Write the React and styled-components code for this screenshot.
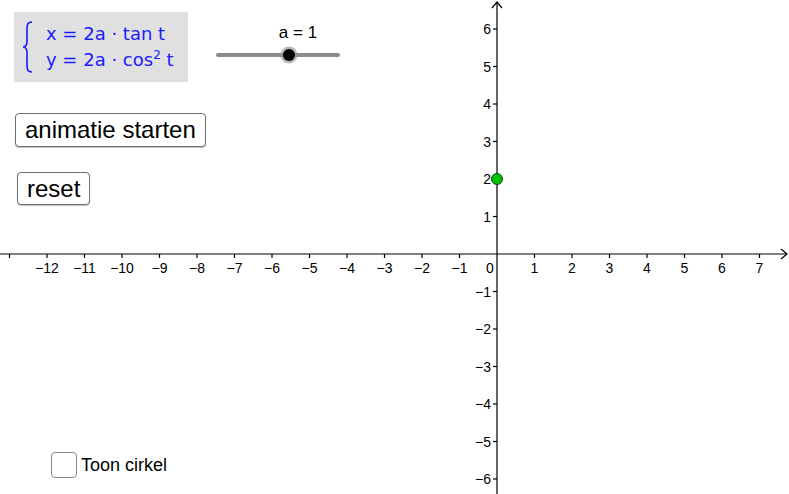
import styled, { createGlobalStyle } from "styled-components";

const W = 789;
const H = 494;
const OX = 497;
const OY = 254;
const U = 37.5;

const GlobalStyle = createGlobalStyle`
  html, body {
    margin: 0;
    padding: 0;
    background: #ffffff;
  }
  body {
    font-family: "Liberation Sans", Arial, sans-serif;
  }
`;

const Applet = styled.div`
  position: relative;
  width: ${W}px;
  height: ${H}px;
  overflow: hidden;
  background: #ffffff;
`;

const Graph = styled.svg`
  position: absolute;
  left: 0;
  top: 0;
`;

const FormulaBox = styled.div`
  position: absolute;
  left: 14px;
  top: 12px;
  width: 174px;
  height: 70px;
  background: #e0e0e0;
  display: flex;
  align-items: center;
  gap: 12px;
  padding-left: 8px;
  box-sizing: border-box;
  color: #1a1aff;
`;

const Lines = styled.div`
  display: flex;
  flex-direction: column;
  gap: 2px;
  font-family: "DejaVu Sans", sans-serif;
  font-size: 18px;
  line-height: 24px;
  white-space: nowrap;
`;

const Sup = styled.sup`
  font-size: 12px;
  vertical-align: 7px;
  line-height: 0;
`;

const SliderWrap = styled.div`
  position: absolute;
  left: 212px;
  top: 23px;
  width: 132px;
  display: flex;
  flex-direction: column;
  align-items: center;
`;

const SliderLabel = styled.div`
  font-size: 17px;
  line-height: 20px;
  color: #000;
  margin-left: 40px;
`;

const Button = styled.button`
  position: absolute;
  left: ${(p) => p.x}px;
  top: ${(p) => p.y}px;
  height: ${(p) => p.h}px;
  padding: 0 9px;
  background: #ffffff;
  border: 1px solid #6e6e6e;
  border-radius: 4px;
  box-shadow: 0 1px 1px rgba(0, 0, 0, 0.25);
  font-family: "Liberation Sans", Arial, sans-serif;
  font-size: 24px;
  color: #000;
  display: flex;
  align-items: center;
`;

const CheckRow = styled.label`
  position: absolute;
  left: 51px;
  top: 452px;
  display: flex;
  align-items: center;
  gap: 4px;
  font-size: 18px;
  color: #000;
`;

const Box = styled.span`
  width: 24px;
  height: 24px;
  border: 1.5px solid #8a8a8a;
  border-radius: 4px;
  background: #fff;
`;

function Brace() {
  return (
    <svg width="12" height="52" viewBox="0 0 12 52">
      <path
        d="M10 1 C5 1 5 4 5 10 L5 20 C5 24 4 26 1 26 C4 26 5 28 5 32 L5 42 C5 48 5 51 10 51"
        fill="none"
        stroke="#1a1aff"
        strokeWidth="1.6"
      />
    </svg>
  );
}

function Axes() {
  const xs = [];
  for (let i = -13; i <= 7; i++) xs.push(i);
  const ys = [];
  for (let j = -6; j <= 6; j++) ys.push(j);
  const fmt = (n) => (n < 0 ? "\u2212" + Math.abs(n) : String(n));
  return (
    <Graph width={W} height={H} viewBox={`0 0 ${W} ${H}`}>
      <g stroke="#000" strokeWidth="1.2" fill="none">
        <line x1="0" y1={OY} x2={W - 2} y2={OY} />
        <line x1={OX} y1={H} x2={OX} y2={2} />
        <polyline points={`${W - 8},${OY - 5} ${W - 2},${OY} ${W - 8},${OY + 5}`} />
        <polyline points={`${OX - 5},8 ${OX},2 ${OX + 5},8`} />
        {xs.filter((i) => i !== 0).map((i) => (
          <line key={"tx" + i} x1={OX + i * U} y1={OY} x2={OX + i * U} y2={OY + 4} />
        ))}
        {ys.filter((j) => j !== 0).map((j) => (
          <line key={"ty" + j} x1={OX - 4} y1={OY - j * U} x2={OX} y2={OY - j * U} />
        ))}
      </g>
      <g fontFamily="Liberation Sans, Arial, sans-serif" fontSize="14" fill="#000">
        {xs.filter((i) => i !== 0 && i > -13).map((i) => (
          <text key={"lx" + i} x={OX + i * U} y={OY + 19} textAnchor="middle">
            {fmt(i)}
          </text>
        ))}
        <text x={OX - 7} y={OY + 19} textAnchor="middle">0</text>
        {ys.filter((j) => j !== 0).map((j) => (
          <text key={"ly" + j} x={OX - 6} y={OY - j * U + 5} textAnchor="end">
            {fmt(j)}
          </text>
        ))}
      </g>
      <circle cx={OX} cy={OY - 2 * U} r="5.5" fill="#00c000" stroke="#005000" strokeWidth="1" />
    </Graph>
  );
}

export default function App() {
  return (
    <>
      <GlobalStyle />
      <Applet>
        <Axes />
        <FormulaBox>
          <Brace />
          <Lines>
            <span>x = 2a · tan t</span>
            <span>
              y = 2a · cos<Sup>2</Sup> t
            </span>
          </Lines>
        </FormulaBox>
        <SliderWrap>
          <SliderLabel>a = 1</SliderLabel>
          <svg width="132" height="24" viewBox="0 0 132 24">
            <line x1="6" y1="12" x2="126" y2="12" stroke="#8c8c8c" strokeWidth="4" strokeLinecap="round" />
            <circle cx="77" cy="12" r="8.5" fill="#999" opacity="0.7" />
            <circle cx="77" cy="12" r="6" fill="#000" />
          </svg>
        </SliderWrap>
        <Button x={15} y={113} h={34}>animatie starten</Button>
        <Button x={17} y={172} h={33}>reset</Button>
        <CheckRow>
          <Box />
          Toon cirkel
        </CheckRow>
      </Applet>
    </>
  );
}
